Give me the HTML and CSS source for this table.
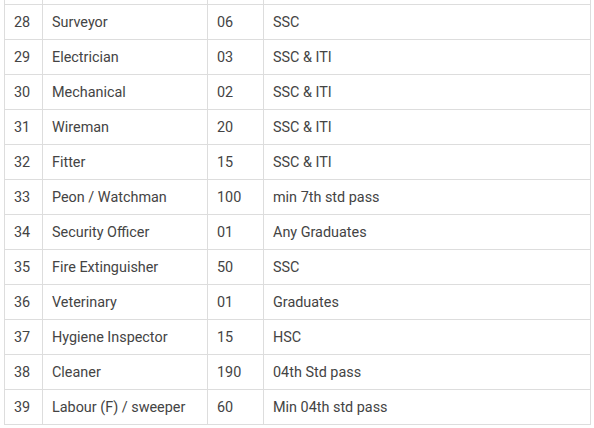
FILE: index.html
```html
<!DOCTYPE html>
<html>
<head>
<meta charset="utf-8">
<link rel="stylesheet" href="styles.css">
</head>
<body>
<div class="wrap">
<table class="jobs">
<colgroup><col class="c1"><col class="c2"><col class="c3"><col class="c4"></colgroup>
<tbody>
<tr class="stub"><td></td><td></td><td></td><td></td></tr>
<tr><td>28</td><td>Surveyor</td><td>06</td><td>SSC</td></tr>
<tr><td>29</td><td>Electrician</td><td>03</td><td>SSC &amp; ITI</td></tr>
<tr><td>30</td><td>Mechanical</td><td>02</td><td>SSC &amp; ITI</td></tr>
<tr><td>31</td><td>Wireman</td><td>20</td><td>SSC &amp; ITI</td></tr>
<tr><td>32</td><td>Fitter</td><td>15</td><td>SSC &amp; ITI</td></tr>
<tr><td>33</td><td>Peon / Watchman</td><td>100</td><td>min 7th std pass</td></tr>
<tr><td>34</td><td>Security Officer</td><td>01</td><td>Any Graduates</td></tr>
<tr><td>35</td><td>Fire Extinguisher</td><td>50</td><td>SSC</td></tr>
<tr><td>36</td><td>Veterinary</td><td>01</td><td>Graduates</td></tr>
<tr><td>37</td><td>Hygiene Inspector</td><td>15</td><td>HSC</td></tr>
<tr><td>38</td><td>Cleaner</td><td>190</td><td>04th Std pass</td></tr>
<tr><td>39</td><td>Labour (F) / sweeper</td><td>60</td><td>Min 04th std pass</td></tr>
</tbody>
</table>
</div>
</body>
</html>
```
FILE: styles.css
```css
html, body {
  margin: 0;
  padding: 0;
  background: #fff;
}
.wrap {
  padding-left: 4px;
}
.jobs {
  border-collapse: collapse;
  table-layout: fixed;
  width: 586px;
  font-family: Roboto, "Liberation Sans", sans-serif;
  font-size: 14.4px;
  color: #444;
}
.c1 { width: 38px; }
.c2 { width: 165px; }
.c3 { width: 56px; }
.c4 { width: 327px; }
.jobs td {
  border: 1px solid #dddddd;
  height: 35px;
  padding: 2px 9px 0;
  box-sizing: border-box;
  vertical-align: middle;
  white-space: nowrap;
}
.jobs tr.stub td {
  height: 4px;
  padding: 0;
  border-top: none;
}
```
